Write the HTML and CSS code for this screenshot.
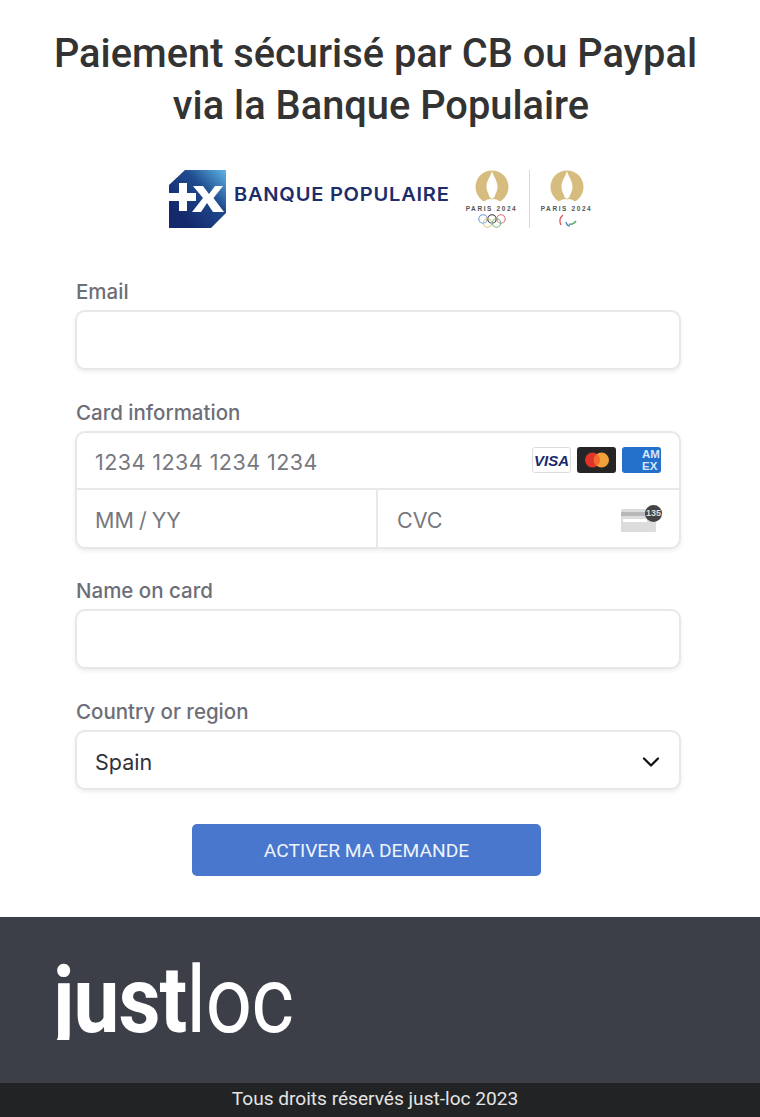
FILE: index.html
```html
<!DOCTYPE html>
<html lang="fr">
<head>
<meta charset="utf-8">
<title>Paiement sécurisé</title>
<link rel="stylesheet" href="styles.css">
</head>
<body>
<main class="page">
  <h1 class="title">Paiement sécurisé par CB ou Paypal<span class="title-second">via la Banque Populaire</span></h1>
  <div class="brand">
    <svg class="bp-mark" width="58" height="58" viewBox="0 0 58 58">
      <defs><linearGradient id="bpg" x1="1" y1="0" x2="0.2" y2="0.8"><stop offset="0" stop-color="#5fb6e6"/><stop offset="0.45" stop-color="#1f4b8f"/><stop offset="1" stop-color="#14296b"/></linearGradient></defs>
      <path d="M16 0H57V43L42 58H0V15Z" fill="url(#bpg)"/>
      <path d="M0 23H10V13H18V23H27V31H18V41H10V31H0Z" fill="#fff"/>
      <path d="M24 16H34L40 24L46 16H54L44.500 28L55 42H44L38 33L32 42H23L34 28Z" fill="#fff"/>
    </svg>
    <span class="bp-name">BANQUE POPULAIRE</span>
    <div class="games">
      <div class="emblem">
        <svg width="34" height="35" viewBox="0 0 34 35"><circle cx="17" cy="17" r="16.5" fill="#d6bc7e"/><path d="M17 1C19 8 23 11 22.5 18C22 22 20 24 19.5 27L17 29L14.5 27C14 24 12 22 11.5 18C11 11 15 8 17 1Z" fill="#fff"/><path d="M8 32Q14 28 17 29.5Q20 28 26 32L20 35H14Z" fill="#fff"/></svg>
        <span class="paris">PARIS 2024</span>
        <svg class="rings" width="30" height="14" viewBox="0 0 30 14" fill="none" stroke-width="1.1"><circle cx="6" cy="5" r="4.2" stroke="#6f9bd8"/><circle cx="15" cy="5" r="4.2" stroke="#333"/><circle cx="24" cy="5" r="4.2" stroke="#d9707a"/><circle cx="10.5" cy="9" r="4.2" stroke="#e3c26c"/><circle cx="19.5" cy="9" r="4.2" stroke="#74b27f"/></svg>
      </div>
      <span class="games-rule"></span>
      <div class="emblem">
        <svg width="34" height="35" viewBox="0 0 34 35"><circle cx="17" cy="17" r="16.5" fill="#d6bc7e"/><path d="M17 1C19 8 23 11 22.5 18C22 22 20 24 19.5 27L17 29L14.5 27C14 24 12 22 11.5 18C11 11 15 8 17 1Z" fill="#fff"/><path d="M8 32Q14 28 17 29.5Q20 28 26 32L20 35H14Z" fill="#fff"/></svg>
        <span class="paris">PARIS 2024</span>
        <svg class="rings" width="20" height="14" viewBox="0 0 20 14" fill="none" stroke-width="1.5"><path d="M6 1Q1 5 4 11" stroke="#d9606a"/><path d="M9 8Q10 12 13 12" stroke="#5f8fd0"/><path d="M12 10Q16 11 19 7" stroke="#62aa72"/></svg>
      </div>
    </div>
  </div>

  <form class="form">
    <div class="field">
      <label class="label">Email</label>
      <div class="box single"></div>
    </div>
    <div class="field">
      <label class="label">Card information</label>
      <div class="box card">
        <div class="row row-top">
          <span class="ph ph-num">1234 1234 1234 1234</span>
          <div class="brands">
            <span class="cb cb-visa">VISA</span>
            <span class="cb cb-mc"><svg width="26" height="16" viewBox="0 0 26 16"><circle cx="8.5" cy="8" r="7.5" fill="#e0332a"/><circle cx="17.5" cy="8" r="7.5" fill="#f0a13a"/><path d="M13 2a7.5 7.5 0 0 1 0 12a7.5 7.5 0 0 1 0-12Z" fill="#f26a2e"/></svg></span>
            <span class="cb cb-amex"><span class="amex-text">AM<br>EX</span></span>
          </div>
        </div>
        <div class="row row-bottom">
          <div class="cell cell-exp"><span class="ph ph-date">MM / YY</span></div>
          <div class="cell cell-cvc">
            <span class="ph">CVC</span>
            <span class="cvc-icon">
              <svg width="36" height="24" viewBox="0 0 36 24"><rect x="0" y="1" width="35" height="23" rx="1.5" fill="#dcdcdc"/><rect x="0" y="4" width="35" height="4" fill="#b8b8b8"/><rect x="2" y="11" width="24" height="3" fill="#fff"/></svg>
              <span class="cvc-badge">135</span>
            </span>
          </div>
        </div>
      </div>
    </div>
    <div class="field">
      <label class="label">Name on card</label>
      <div class="box single"></div>
    </div>
    <div class="field">
      <label class="label">Country or region</label>
      <div class="box single select">
        <span class="value">Spain</span>
        <svg width="18" height="12" viewBox="0 0 18 12" fill="none"><path d="M2 2.5L9 9.5L16 2.5" stroke="#111" stroke-width="2.2" stroke-linecap="round" stroke-linejoin="round"/></svg>
      </div>
    </div>
    <div class="actions">
      <button type="button" class="submit">ACTIVER MA DEMANDE</button>
    </div>
  </form>
</main>
<footer class="footer">
  <div class="footer-main"><span class="logo"><b>just</b><span>loc</span></span></div>
  <div class="copyright">Tous droits réservés just-loc 2023</div>
</footer>
</body>
</html>
```
FILE: styles.css
```css
* { box-sizing: border-box; }
html, body { margin: 0; padding: 0; background: #fff; }
body { font-family: "Roboto", "Liberation Sans", sans-serif; width: 760px; }
.page { padding-top: 28px; height: 917px; }
.title {
  margin: 0 9px 0 0;
  text-align: center;
  font-family: "Roboto", sans-serif;
  font-weight: 500;
  font-size: 39.8px;
  line-height: 52px;
  color: #333;
}
.title-second { display: block; padding-left: 11px; }
.brand {
  display: flex;
  align-items: flex-start;
  margin: 38px 0 0 169px;
  height: 60px;
}
.bp-mark { flex: none; }
.bp-name {
  font-family: "Inter", sans-serif;
  font-weight: 600;
  font-size: 18.6px;
  line-height: 24px;
  letter-spacing: 0.7px;
  color: #1d2d6b;
  margin: 12px 0 0 7px;
  white-space: nowrap;
  width: 216px;
  transform: scaleX(1.08);
  transform-origin: left center;
}
.games { display: flex; align-items: flex-start; margin-left: 15px; gap: 11px; }
.emblem { display: flex; flex-direction: column; align-items: center; width: 53px; }
.paris {
  font-family: "Liberation Sans", sans-serif;
  font-weight: 700;
  font-size: 6.5px;
  line-height: 7px;
  letter-spacing: 1.6px;
  color: #555;
  white-space: nowrap;
}
.rings { margin-top: 2px; }
.games-rule { width: 1px; height: 58px; background: #d8d8d8; margin-right: -1px; }
.form { margin: 50px 79px 0 75px; }
.field { margin-bottom: 30.5px; }
.label {
  display: block;
  font-family: "Inter", sans-serif;
  font-weight: 500;
  font-size: 20.5px;
  line-height: 24px;
  color: #6d6e78;
  margin: 0 0 6px 1px;
}
.box {
  background: #fff;
  border: 2px solid #e8e8e8;
  border-radius: 10px;
  box-shadow: 0 2px 4px rgba(0,0,0,.07);
}
.single { height: 60px; }
.card { height: 118px; }
.row { display: flex; align-items: center; }
.row-top { height: 57px; padding: 3px 18px 0 18px; justify-content: space-between; border-bottom: 2px solid #e8e8e8; }
.row-bottom { height: 57px; }
.cell { height: 100%; display: flex; align-items: center; padding-top: 3px; }
.cell-exp { width: 301px; padding-left: 18px; border-right: 2px solid #e8e8e8; }
.cell-cvc { flex: 1; padding-left: 19px; padding-right: 19px; justify-content: space-between; }
.ph, .value { font-family: "Inter", sans-serif; font-size: 21.5px; line-height: 26px; }
.ph { color: #77787f; }
.ph-num { letter-spacing: 0.45px; }
.ph-date { word-spacing: -1px; }
.value { color: #30313d; }
.brands { display: flex; gap: 6px; margin-top: -3px; }
.cb { display: flex; align-items: center; justify-content: center; width: 39px; height: 26px; border-radius: 3px; overflow: hidden; }
.cb-visa {
  background: #fff; border: 1px solid #dcdcdc;
  font-family: "Liberation Sans", sans-serif; font-style: italic; font-weight: 700; font-size: 15px; color: #1a2a6c;
}
.cb-mc { background: #252525; }
.cb-amex { background: #2471cc; justify-content: flex-end; }
.amex-text {
  font-family: "Liberation Sans", sans-serif; font-weight: 700; font-size: 11.5px; line-height: 12px;
  color: #d7e7f9; width: 19px; flex: none;
}
.cvc-icon { position: relative; display: block; width: 36px; height: 24px; margin-right: 3px; }
.cvc-icon svg { display: block; }
.cvc-badge {
  position: absolute; right: -5px; top: -3px; width: 17px; height: 17px; border-radius: 50%;
  background: #444; color: #ddd;
  font-family: "Liberation Sans", sans-serif; font-size: 9px; font-weight: 700; line-height: 17px; text-align: center;
}
.select { display: flex; align-items: center; justify-content: space-between; padding: 4px 19px 0 18px; }
.actions { display: flex; justify-content: center; margin: -28px 0 0; padding-top: 32px; padding-right: 23px; }
.submit {
  width: 349px; height: 52px; border: 0; border-radius: 5px;
  background: #4877cd; color: #eef3fb;
  font-family: "Roboto", sans-serif; font-size: 19.2px; font-weight: 400;
}
.footer { background: #3c3e48; height: 200px; }
.footer-main { height: 166px; padding: 45px 0 0 53px; }
.logo {
  display: block;
  width: 290px;
  height: 78px;
  font-family: "Roboto", sans-serif;
  font-size: 92px;
  line-height: 78px;
  color: #fff;
  letter-spacing: -1px;
  transform: scaleX(.89);
  transform-origin: left center;
  white-space: nowrap;
  clip-path: polygon(-10px 0, 100% 0, 100% 100%, -10px 100%);
}
.logo b { font-weight: 700; }
.logo span { font-weight: 400; }
.copyright {
  height: 34px;
  background: #222325;
  color: #e4e4e4;
  font-size: 19.1px;
  line-height: 31px;
  text-align: center;
  padding-right: 10px;
}
```
